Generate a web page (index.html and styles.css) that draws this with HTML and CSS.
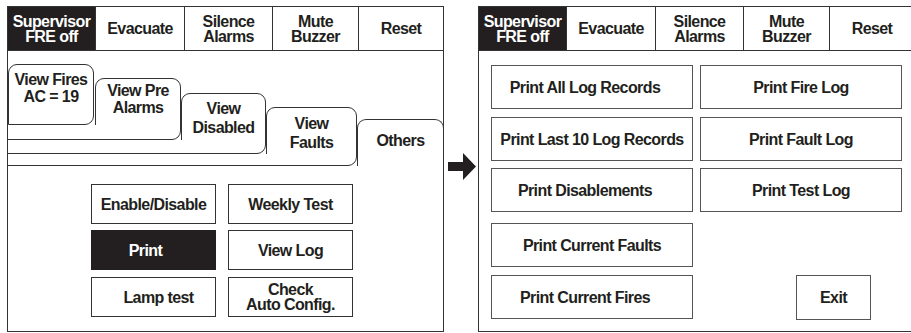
FILE: index.html
```html
<!DOCTYPE html>
<html lang="en">
<head>
  <meta charset="UTF-8">
  <meta name="viewport" content="width=device-width, initial-scale=1.0">
  <title>Panel Menu - Print</title>
  <link rel="stylesheet" href="styles.css">
</head>
<body>
  <!-- Others menu -->
  <div class="panel">
    <div class="topbar">
      <div class="topbtn active">Supervisor<br>FRE off</div>
      <div class="topbtn">Evacuate</div>
      <div class="topbtn">Silence<br>Alarms</div>
      <div class="topbtn">Mute<br>Buzzer</div>
      <div class="topbtn">Reset</div>
    </div>
    <div class="tabs">
      <div class="tab tab-fires">View Fires<br>AC = 19</div>
      <div class="tab tab-pre">View Pre<br>Alarms</div>
      <div class="tab tab-disabled">View<br>Disabled</div>
      <div class="tab tab-faults">View<br>Faults</div>
      <div class="tab tab-others">Others</div>
    </div>
    <div class="others-menu">
      <div class="btn">Enable/Disable</div>
      <div class="btn">Weekly Test</div>
      <div class="btn selected">Print</div>
      <div class="btn">View Log</div>
      <div class="btn lamp">Lamp test</div>
      <div class="btn">Check<br>Auto Config.</div>
    </div>
  </div>

  <div class="arrow">
    <svg width="28" height="28" viewBox="0 0 28 28">
      <polygon points="0,9 15,9 15,0 28,13.5 15,27 15,18 0,18" fill="#231f20"/>
    </svg>
  </div>

  <!-- Print menu -->
  <div class="panel">
    <div class="topbar">
      <div class="topbtn active">Supervisor<br>FRE off</div>
      <div class="topbtn">Evacuate</div>
      <div class="topbtn">Silence<br>Alarms</div>
      <div class="topbtn">Mute<br>Buzzer</div>
      <div class="topbtn">Reset</div>
    </div>
    <div class="print-menu">
      <div class="btn wide shift">Print All Log Records</div>
      <div class="btn wide">Print Fire Log</div>
      <div class="btn wide">Print Last 10 Log Records</div>
      <div class="btn wide">Print Fault Log</div>
      <div class="btn wide shift">Print Disablements</div>
      <div class="btn wide">Print Test Log</div>
      <div class="btn wide">Print Current Faults</div>
      <div></div>
      <div class="btn wide shift">Print Current Fires</div>
      <div class="btn exit">Exit</div>
    </div>
  </div>
</body>
</html>
```

FILE: styles.css
```css
body {
  margin: 0;
  padding: 6px 0 0 7px;
  width: 911px;
  height: 333px;
  box-sizing: border-box;
  overflow: hidden;
  display: flex;
  align-items: flex-start;
  background: #fff;
  color: #231f20;
  font-family: "Liberation Sans", Arial, sans-serif;
  font-size: 16px;
  font-weight: bold;
  letter-spacing: -0.6px;
}
.panel {
  flex: none;
  width: 437px;
  height: 326px;
  box-sizing: border-box;
  border: 1px solid #333;
  display: flex;
  flex-direction: column;
}

/* top row of keys */
.topbar {
  display: grid;
  grid-template-columns: 88px 89px 88px 86px 1fr;
  height: 44px;
  box-sizing: border-box;
  border-bottom: 1px solid #333;
}
.topbtn {
  display: flex;
  align-items: center;
  justify-content: center;
  text-align: center;
  line-height: 15px;
  border-right: 1px solid #333;
}
.topbtn:last-child {
  border-right: none;
}
.topbtn.active {
  background: #231f20;
  color: #fff;
}

/* folder tabs */
.tabs {
  position: relative;
  height: 115px;
  margin: 0 -1px;
  overflow: hidden;
  display: flex;
  align-items: flex-start;
}
.tab {
  position: relative;
  flex: none;
  box-sizing: border-box;
  border: 1px solid #333;
  border-radius: 9px 9px 9px 0;
  background: #fff;
  text-align: center;
  line-height: 17px;
}
.tab-pre::before,
.tab-disabled::before,
.tab-faults::before {
  content: "";
  position: absolute;
  right: 100%;
  bottom: -1px;
  width: 400px;
  border-bottom: 1px solid #333;
}
.tab-pre::after,
.tab-disabled::after,
.tab-faults::after {
  content: "";
  position: absolute;
  left: -1px;
  top: 46px;
  bottom: 0;
  width: 1px;
  background: #fff;
}
.tab-fires {
  margin: 13px 0 0 1px;
  width: 86px;
  height: 61px;
  padding-top: 6px;
  z-index: 5;
}
.tab-pre {
  margin: 27px 0 0 1px;
  width: 86px;
  height: 62px;
  padding-top: 3px;
  z-index: 4;
}
.tab-disabled {
  margin-top: 42px;
  width: 85px;
  height: 61px;
  padding-top: 5px;
  line-height: 19px;
  z-index: 3;
}
.tab-faults {
  margin-top: 56px;
  width: 91px;
  height: 59px;
  padding-top: 6px;
  line-height: 19px;
  z-index: 2;
}
.tab-others {
  margin-top: 68px;
  width: 87px;
  height: 47px;
  border-bottom: none;
  border-radius: 9px 9px 0 0;
  display: flex;
  align-items: center;
  justify-content: center;
  padding-bottom: 6px;
  z-index: 1;
}

/* buttons */
.btn {
  box-sizing: border-box;
  border: 1px solid #333;
  display: flex;
  align-items: center;
  justify-content: center;
  text-align: center;
  line-height: 15px;
  height: 40px;
}
.btn.selected {
  background: #231f20;
  border-color: #231f20;
  color: #fff;
  padding-right: 16px;
}
.btn.lamp {
  padding-left: 10px;
}
.others-menu {
  display: grid;
  grid-template-columns: 125px 125px;
  grid-template-rows: 46px 47px 40px;
  column-gap: 12px;
  align-items: start;
  padding: 18px 0 0 83px;
}
.print-menu {
  display: grid;
  grid-template-columns: 202px 202px;
  grid-template-rows: 52px 51px 55px 52px 44px;
  column-gap: 7px;
  align-items: start;
  padding: 14px 0 0 12px;
}
.btn.wide {
  height: 44px;
  border-color: #555;
}
.btn.shift {
  padding-right: 14px;
}
.btn.exit {
  width: 75px;
  height: 45px;
  margin-left: 96px;
  border-color: #555;
}

.arrow {
  flex: none;
  margin: 147px 2px 0 4px;
  height: 28px;
}
.arrow svg {
  display: block;
}
```
